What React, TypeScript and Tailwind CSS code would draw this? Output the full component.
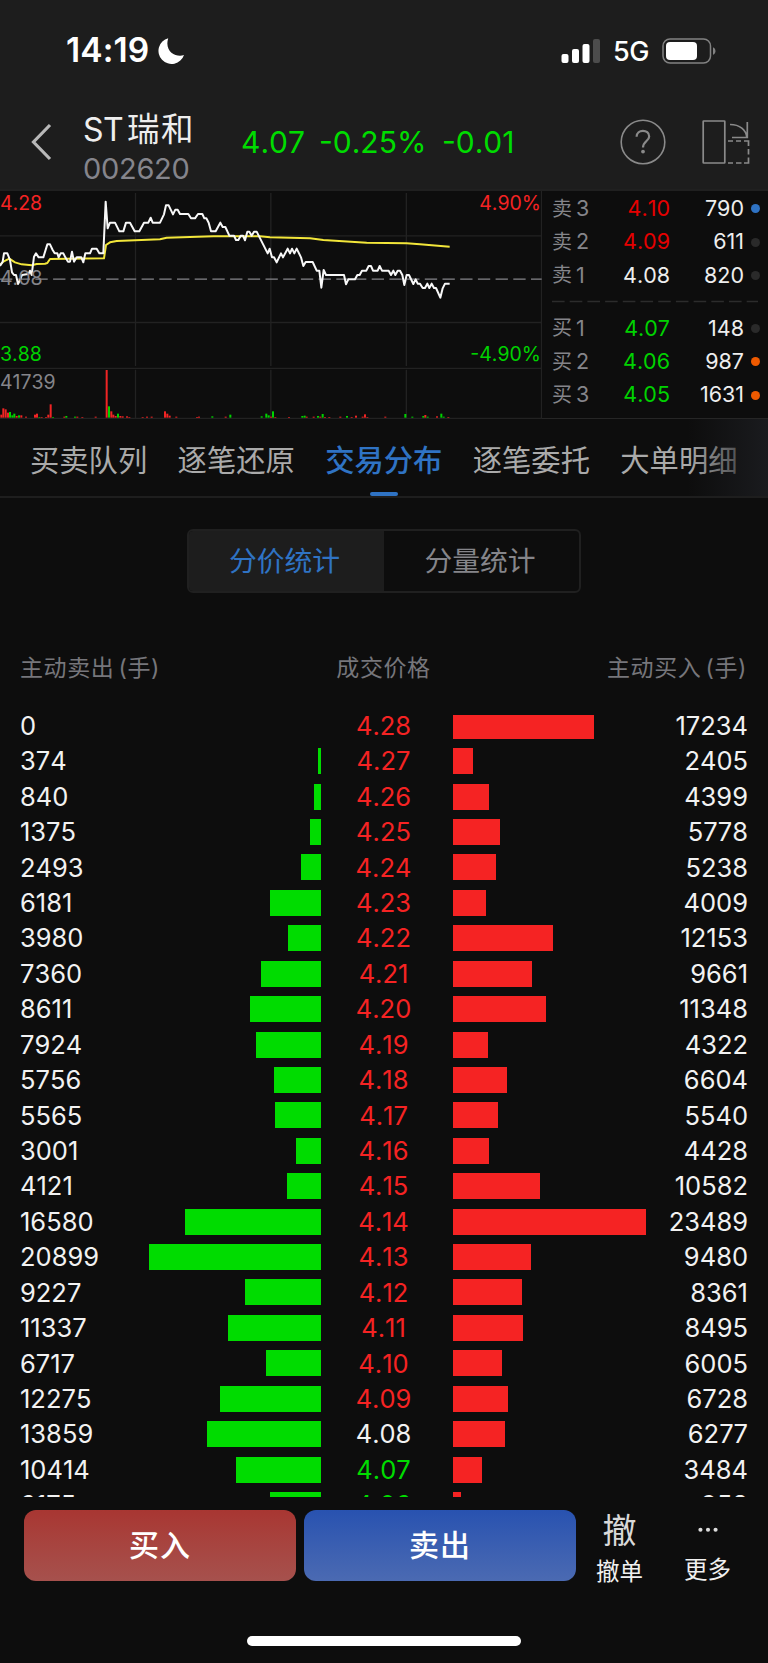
import React from 'react';

interface PriceRow {
  sell: number;
  price: string;
  buy: number;
}

interface Quote {
  side: string;
  level: number;
  price: string;
  volume: number;
  priceColor: string;
  dotColor: string;
}

const PREV_CLOSE = 4.08;
const PX_PER_LOT = 0.00821;

const rows: PriceRow[] = [
  { sell: 0, price: '4.28', buy: 17234 },
  { sell: 374, price: '4.27', buy: 2405 },
  { sell: 840, price: '4.26', buy: 4399 },
  { sell: 1375, price: '4.25', buy: 5778 },
  { sell: 2493, price: '4.24', buy: 5238 },
  { sell: 6181, price: '4.23', buy: 4009 },
  { sell: 3980, price: '4.22', buy: 12153 },
  { sell: 7360, price: '4.21', buy: 9661 },
  { sell: 8611, price: '4.20', buy: 11348 },
  { sell: 7924, price: '4.19', buy: 4322 },
  { sell: 5756, price: '4.18', buy: 6604 },
  { sell: 5565, price: '4.17', buy: 5540 },
  { sell: 3001, price: '4.16', buy: 4428 },
  { sell: 4121, price: '4.15', buy: 10582 },
  { sell: 16580, price: '4.14', buy: 23489 },
  { sell: 20899, price: '4.13', buy: 9480 },
  { sell: 9227, price: '4.12', buy: 8361 },
  { sell: 11337, price: '4.11', buy: 8495 },
  { sell: 6717, price: '4.10', buy: 6005 },
  { sell: 12275, price: '4.09', buy: 6728 },
  { sell: 13859, price: '4.08', buy: 6277 },
  { sell: 10414, price: '4.07', buy: 3484 },
  { sell: 6175, price: '4.06', buy: 958 },
];

const asks: Quote[] = [
  { side: '卖', level: 3, price: '4.10', volume: 790, priceColor: 'text-[#e60000]', dotColor: 'bg-[#2f73c4]' },
  { side: '卖', level: 2, price: '4.09', volume: 611, priceColor: 'text-[#e60000]', dotColor: 'bg-[#2a2a2a]' },
  { side: '卖', level: 1, price: '4.08', volume: 820, priceColor: 'text-[#eeeeee]', dotColor: 'bg-[#2a2a2a]' },
];

const bids: Quote[] = [
  { side: '买', level: 1, price: '4.07', volume: 148, priceColor: 'text-[#00d200]', dotColor: 'bg-[#2a2a2a]' },
  { side: '买', level: 2, price: '4.06', volume: 987, priceColor: 'text-[#00d200]', dotColor: 'bg-[#ef5a00]' },
  { side: '买', level: 3, price: '4.05', volume: 1631, priceColor: 'text-[#00d200]', dotColor: 'bg-[#ef5a00]' },
];

const tabs = ['买卖队列', '逐笔还原', '交易分布', '逐笔委托', '大单明细'];

// Chart units are thirds of a pixel
const priceLine =
  '0,243 8,230 12,205 22,205 30,225 36,262 42,270 48,270 54,297 60,285 66,270 80,268 85,268 90,257 95,270 102,215 108,205 116,217 130,217 142,178 150,178 158,195 164,205 172,205 176,217 182,205 190,205 196,217 204,230 210,230 216,200 222,230 230,217 244,217 250,232 256,205 270,205 276,191 290,191 298,205 310,205 317,50 323,130 330,113 345,113 358,139 370,139 378,113 390,113 404,139 418,139 432,113 445,113 452,98 458,113 480,113 492,88 498,61 506,61 519,88 526,74 533,74 540,87 565,87 573,100 585,100 594,87 607,87 613,100 619,100 626,113 633,139 647,139 661,113 668,126 676,126 688,152 702,152 708,165 715,165 722,152 729,152 735,166 742,140 748,140 755,152 762,140 770,140 803,205 809,191 816,217 822,217 830,232 843,205 849,217 863,191 870,205 876,191 883,205 890,191 903,217 910,243 917,231 938,231 950,257 958,257 964,308 971,255 978,270 1032,270 1038,298 1045,283 1065,283 1072,270 1079,270 1086,257 1099,257 1106,243 1113,243 1119,257 1133,257 1139,243 1146,257 1166,257 1173,270 1180,257 1186,270 1193,257 1200,257 1207,270 1213,300 1220,270 1227,270 1240,297 1247,283 1253,296 1260,296 1268,309 1275,309 1282,296 1288,309 1295,296 1302,309 1308,309 1321,338 1328,310 1335,296 1349,296';

const averageLine =
  '0,240 10,230 28,221 45,232 65,238 95,241 110,237 135,236 142,234 150,222 312,220 318,180 330,172 350,168 480,163 500,158 640,154 780,154 810,157 930,160 970,165 1100,173 1220,175 1260,178 1349,185';

// [x, height, rising]
const volumes: [number, number, boolean][] = [
  [1, 9, true], [7, 28, true], [14, 25, true], [21, 15, true], [27, 17, false], [34, 7, false], [40, 12, false],
  [47, 5, true], [54, 7, false], [61, 7, true], [75, 3, true], [102, 9, true], [108, 12, true], [115, 2, false],
  [122, 2, true], [135, 2, true], [142, 9, true], [149, 40, true], [156, 2, false], [190, 3, true], [196, 5, false],
  [222, 3, false], [229, 3, true], [244, 2, true], [284, 3, true], [317, 143, true], [324, 34, false],
  [331, 19, true], [337, 9, true], [344, 5, true], [351, 12, false], [358, 5, true], [365, 4, true], [378, 4, true],
  [385, 2, true], [425, 2, true], [438, 3, true], [452, 3, true], [492, 19, true], [499, 12, true], [506, 6, true],
  [526, 3, true], [588, 2, true], [594, 3, true], [634, 4, false], [674, 3, true], [688, 9, false], [782, 4, false],
  [796, 12, false], [803, 7, false], [810, 3, true], [816, 19, false], [823, 2, true], [864, 2, true],
  [904, 5, false], [911, 6, false], [917, 3, true], [938, 3, true], [951, 5, false], [958, 3, true], [965, 11, false],
  [972, 2, true], [985, 2, true], [1018, 3, true], [1038, 5, false], [1052, 2, true], [1065, 6, true],
  [1085, 3, true], [1092, 10, true], [1099, 2, true], [1153, 3, true], [1213, 11, false], [1234, 3, false],
  [1267, 5, false], [1273, 8, true], [1280, 3, false], [1308, 4, true], [1321, 12, false], [1328, 3, false],
  [1342, 2, true],
];

const StatusBar = () => (
  <div className="flex h-[102px] items-center pl-[66px] pr-[52px]">
    <span className="text-[33.5px] font-semibold leading-none tracking-[0.1px] text-white">14:19</span>
    <svg className="ml-[8px]" width="28" height="28" viewBox="0 0 28 28">
      <path d="M11.2 1.2A13.1 13.1 0 1 0 27 18C19.5 20.8 7 15 11.2 1.2Z" fill="#fff" />
    </svg>
    <div className="ml-auto flex items-center">
      <svg width="40" height="26" viewBox="0 0 40 26">
        <rect x="0.5" y="16" width="7" height="9" rx="2" fill="#fff" />
        <rect x="11" y="11" width="7" height="14" rx="2" fill="#fff" />
        <rect x="21.5" y="6" width="7" height="19" rx="2" fill="#fff" />
        <rect x="32" y="1" width="7" height="24" rx="2" fill="#4c4c4c" />
      </svg>
      <span className="ml-[12px] w-[37px] whitespace-nowrap pt-[1px] text-[27px] font-medium leading-none tracking-[-0.5px] text-white">5G</span>
      <svg className="ml-[12px]" width="54" height="26" viewBox="0 0 54 26">
        <rect x="1" y="1" width="47.5" height="24" rx="7" fill="none" stroke="#828282" strokeWidth="1.5" />
        <rect x="4" y="4" width="31" height="18" rx="4" fill="#fff" />
        <path d="M51 9.2C54.3 10.5 54.3 15.5 51 16.8Z" fill="#828282" />
      </svg>
    </div>
  </div>
);

const Header = () => (
  <div className="flex h-[88px] items-center pl-[30px] pr-[18px] pb-[8px]">
    <svg width="22" height="38" viewBox="0 0 22 38">
      <path d="M20 2L3.5 19L20 36" fill="none" stroke="#b8b8b8" strokeWidth="3.2" />
    </svg>
    <div className="ml-[31px] mt-[12px] flex w-[158px] flex-col">
      <div className="flex h-[41px] items-center whitespace-nowrap text-[32.5px] leading-none text-[#eeeeee]">
        <span className="w-[44px] text-[32px] tracking-[-0.5px]">ST</span>
        <span className="tracking-[1.5px]">瑞和</span>
      </div>
      <div className="h-[36px] text-[29px] leading-[36px] tracking-[-0.3px] text-[#85858c]">002620</div>
    </div>
    <div className="flex whitespace-nowrap text-[30px] leading-none text-[#00dc00]">
      <span className="w-[78px]">4.07</span>
      <span className="w-[123px]">-0.25%</span>
      <span>-0.01</span>
    </div>
    <div className="ml-auto flex items-center gap-[36px]">
      <svg width="46" height="46" viewBox="0 0 46 46" fill="none" stroke="#8a8a8a">
        <circle cx="23" cy="23" r="21.8" strokeWidth="1.6" />
        <path d="M16.6 17.8C16.6 9.8 29.2 10 29.2 17.4C29.2 22 23 22.3 23 28.6" strokeWidth="2.2" />
        <circle cx="23" cy="32.6" r="1.9" fill="#8a8a8a" stroke="none" />
      </svg>
      <svg width="48" height="46" viewBox="0 0 48 46" fill="none" stroke="#8a8a8a" strokeWidth="1.7">
        <rect x="1.2" y="2" width="21.6" height="42" rx="0.5" />
        <path d="M28 5.5C38 5.5 44 11 44.8 18.3M45.3 3V18.5H30" />
        <path d="M26 22H31M34 22H39M42 22H46.5V27M46.5 30V35.5M46.5 38.5V44H42M39.5 44H34M31 44H26" />
      </svg>
    </div>
  </div>
);

const MiniChart = () => (
  <div className="relative h-[228px] w-[542px] text-[19.5px] leading-none">
    <svg className="block" width="542" height="228" viewBox="0 18 1626 684">
      <g stroke="#222222" strokeWidth="4" fill="none">
        <path d="M0 152.5H1625M0 412.5H1625M0 550H1625M0 700H1626M1624.5 18V700" />
        <path d="M406.5 24V543M812.5 24V543M1219 24V543M406.5 554V700M812.5 554V700M1219 554V700" />
      </g>
      {volumes.map(([x, height, rising]) => (
        <rect key={x} x={x} y={698 - height} width="6" height={height} fill={rising ? '#f02424' : '#00d200'} />
      ))}
      <path d="M0 282.5H1625" stroke="#85858a" strokeWidth="4" strokeDasharray="37 16.1" />
      <polyline points={averageLine} fill="none" stroke="#f2e63a" strokeWidth="6" strokeLinejoin="round" />
      <polyline points={priceLine} fill="none" stroke="#f8f8f8" strokeWidth="6" strokeLinejoin="round" />
    </svg>
    <span className="absolute left-0 top-[3px] text-[#f52323]">4.28</span>
    <span className="absolute left-0 top-[78px] text-[#85858a]">4.08</span>
    <span className="absolute left-0 top-[154px] text-[#00d200]">3.88</span>
    <span className="absolute left-0 top-[182px] text-[#85858a]">41739</span>
    <span className="absolute right-[1px] top-[3px] text-[#f52323]">4.90%</span>
    <span className="absolute right-[1px] top-[154px] text-[#00d200]">-4.90%</span>
  </div>
);

const QuoteRow: React.FC<{ quote: Quote }> = ({ quote }) => (
  <div className="flex h-[33.4px] items-center whitespace-nowrap text-[21.5px] leading-none">
    <span className="w-[24px] text-[20px] text-[#85858a]">{quote.side}</span>
    <span className="w-[14px] text-[#85858a]">{quote.level}</span>
    <span className={`w-[80px] text-right ${quote.priceColor}`}>{quote.price}</span>
    <span className="w-[74px] text-right text-[#eeeeee]">{quote.volume}</span>
    <span className={`ml-[7px] h-[9px] w-[9px] rounded-full ${quote.dotColor}`} />
  </div>
);

const OrderBook = () => (
  <div className="flex-1 pl-[10px] pt-[1px]">
    {asks.map(q => <QuoteRow key={q.level} quote={q} />)}
    <svg className="block" width="206" height="19.5" viewBox="0 0 206 19.5">
      <path d="M0 9.5H206" stroke="#2c2c2c" strokeWidth="1.7" strokeDasharray="12.6 5.1" />
    </svg>
    {bids.map(q => <QuoteRow key={q.level} quote={q} />)}
  </div>
);

const Tabs = () => (
  <div className="relative flex h-[79px] gap-[30.4px] overflow-hidden border-b-2 border-[#1e1e1e] pl-[30px]">
    {tabs.map(tab => {
      const active = tab === '交易分布';
      return (
        <div
          key={tab}
          className={`flex shrink-0 flex-col items-center text-[29.3px] leading-[84px] ${active ? 'font-medium text-[#2f73c4]' : 'text-[#aaaaaa]'}`}
        >
          <span className="h-[73px] whitespace-nowrap">{tab}</span>
          {active && <span className="h-[4px] w-[28px] rounded-full bg-[#2f73c4]" />}
        </div>
      );
    })}
    <div className="absolute right-0 top-0 h-full w-[80px] bg-gradient-to-r from-[#1a1b1e]/0 to-[#1a1b1e]" />
  </div>
);

const DistributionRow: React.FC<{ row: PriceRow; first: boolean }> = ({ row, first }) => {
  const price = Number(row.price);
  const color = price > PREV_CLOSE ? 'text-[#f52323]' : price < PREV_CLOSE ? 'text-[#00dc00]' : 'text-[#f2f2f2]';
  const barHeight = first ? 'mt-[2px] h-[24px]' : 'h-[26px]';

  return (
    <div className="flex h-[35.43px] shrink-0 items-center px-[20px] text-[25.5px] leading-none text-[#f2f2f2]">
      <span className="w-[110px]">{row.sell}</span>
      <div className="flex w-[191px] justify-end">
        <div className={`bg-[#00dc00] ${barHeight}`} style={{ width: row.sell * PX_PER_LOT }} />
      </div>
      <span className={`w-[132px] pr-[7px] text-center ${color}`}>{row.price}</span>
      <div className="w-[194px]">
        <div className={`bg-[#f52323] ${barHeight}`} style={{ width: row.buy * PX_PER_LOT }} />
      </div>
      <span className="flex-1 text-right">{row.buy}</span>
    </div>
  );
};

const BottomBar = () => (
  <div className="flex h-[71px] pl-[24px]">
    <button className="h-[71px] w-[272px] rounded-[12px] bg-gradient-to-b from-[#a83632] to-[#a6514d] text-[30px] font-medium tracking-[1px] text-white">
      买入
    </button>
    <button className="ml-[8px] h-[71px] w-[272px] rounded-[12px] bg-gradient-to-b from-[#2852b0] to-[#4b6ab2] text-[30px] font-medium tracking-[1px] text-white">
      卖出
    </button>
    <div className="ml-[10px] flex w-[67px] flex-col items-center whitespace-nowrap leading-none text-[#f0f0f0]">
      <span className="mt-[4px] text-[34px] text-[#d8d8d8]">撤</span>
      <span className="mt-[12px] text-[23.5px]">撤单</span>
    </div>
    <div className="ml-[21px] flex w-[67px] flex-col items-center whitespace-nowrap leading-none text-[#f0f0f0]">
      <svg className="mt-[17px]" width="30" height="8" viewBox="0 0 30 8" fill="#dcdcdc">
        <circle cx="4" cy="4" r="3" />
        <circle cx="15" cy="4" r="3" />
        <circle cx="26" cy="4" r="3" />
      </svg>
      <span className="mt-[25px] text-[23.5px]">更多</span>
    </div>
  </div>
);

const App: React.FC = () => {
  return (
    <div className="flex h-[1663px] w-[768px] flex-col overflow-hidden bg-[#0d0d0d] font-['Inter','Noto_Sans_CJK_SC',sans-serif] [font-kerning:none]">
      <div className="h-[191px] shrink-0 border-b-2 border-[#202020] bg-[#1d1d1d]">
        <StatusBar />
        <Header />
      </div>

      <div className="flex h-[228px] shrink-0 border-b border-[#262626]">
        <MiniChart />
        <OrderBook />
      </div>

      <Tabs />

      <div className="mt-[31px] flex h-[64px] w-[394px] shrink-0 self-center overflow-hidden rounded-[6px] border-2 border-[#202020] text-[27.8px] leading-[61px]">
        <div className="w-1/2 bg-[#1d1d1d] pr-[4px] text-center text-[#2f73c4]">分价统计</div>
        <div className="w-1/2 pr-[3px] text-center text-[#85858a]">分量统计</div>
      </div>

      <div className="mt-[52px] flex h-[46px] shrink-0 justify-between pl-[20px] pr-[21px] text-[23px] leading-[46px] tracking-[0.6px] text-[#76767b]">
        <span className="w-[150px] [word-spacing:-3px]">主动卖出 (手)</span>
        <span>成交价格</span>
        <span className="w-[150px] text-right [word-spacing:-3px]">主动买入 (手)</span>
      </div>

      <div className="mt-[17px] flex h-[789px] shrink-0 flex-col overflow-hidden">
        {rows.map((row, i) => <DistributionRow key={row.price} row={row} first={i === 0} />)}
      </div>

      <div className="mt-[13px] shrink-0">
        <BottomBar />
      </div>
      <div className="mt-[55px] h-[10px] w-[274px] shrink-0 self-center rounded-full bg-white" />
    </div>
  );
};

export default App;
